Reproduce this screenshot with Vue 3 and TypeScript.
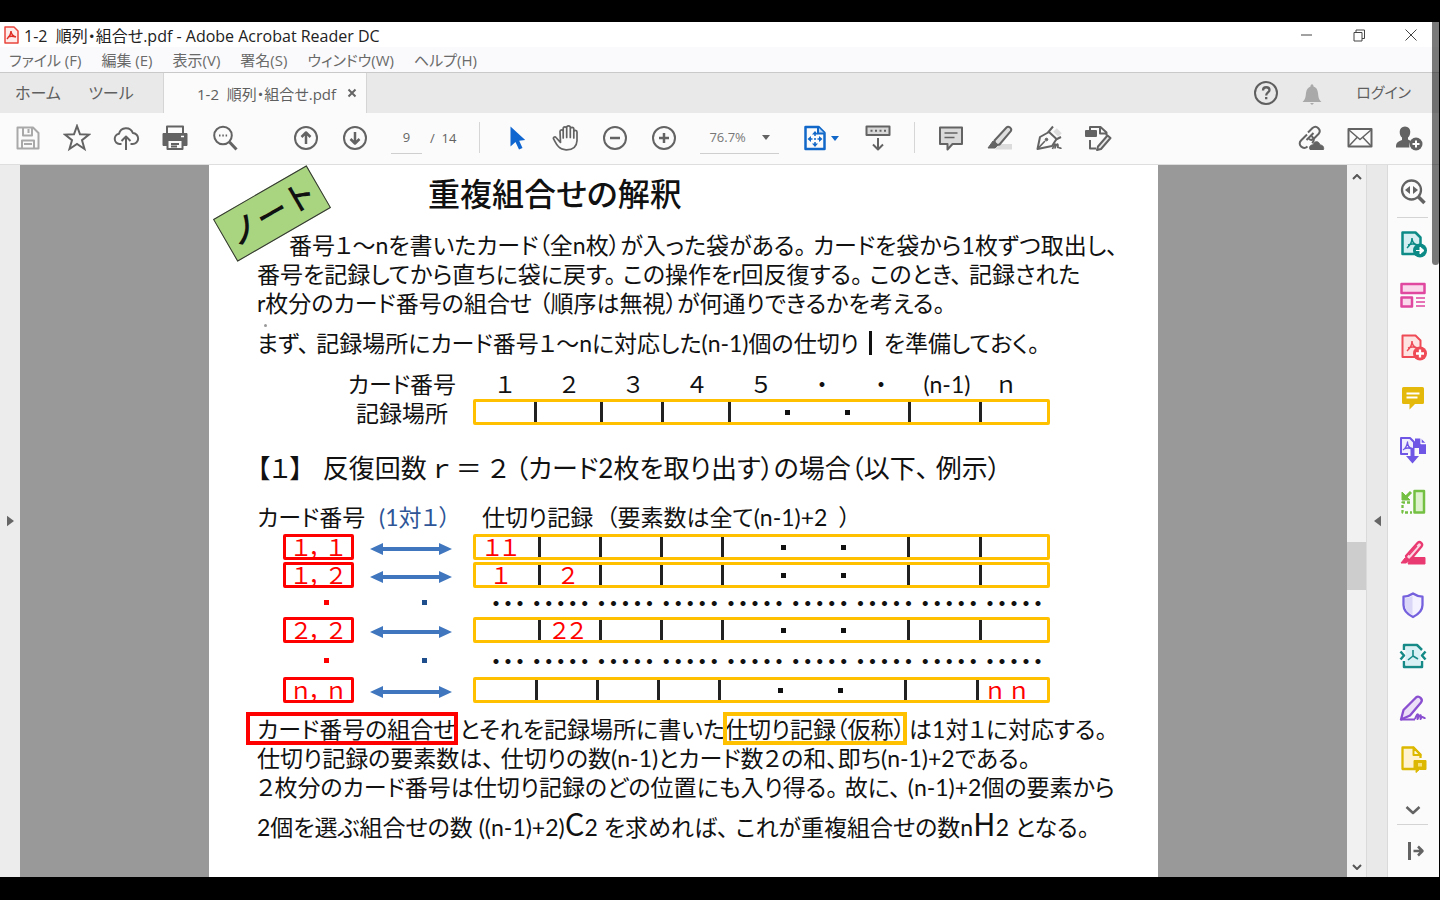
<script setup lang="ts">
import { ref } from 'vue'

interface Tool {
  icon: string
  label: string
  color?: string
}

interface RecordRow {
  pair?: string
  cells?: string[]
  variant?: string
}

const menus: string[] = ['ファイル (F)', '編集 (E)', '表示(V)', '署名(S)', 'ウィンドウ(W)', 'ヘルプ(H)']

const page = ref('9')
const zoom = ref('76.7%')

const fileTools: Tool[] = [
  { icon: 'save', label: '保存', color: '#a9a9a9' },
  { icon: 'star', label: 'スター' },
  { icon: 'cloud', label: 'アップロード' },
  { icon: 'print', label: '印刷' },
  { icon: 'find', label: '検索' },
]
const pageTools: Tool[] = [
  { icon: 'up', label: '前のページ' },
  { icon: 'down', label: '次のページ' },
]
const viewTools: Tool[] = [
  { icon: 'pointer', label: '選択', color: '#0f66d0' },
  { icon: 'hand', label: '手のひら' },
  { icon: 'minus', label: '縮小' },
  { icon: 'plus', label: '拡大' },
]
const noteTools: Tool[] = [
  { icon: 'comment', label: 'コメント' },
  { icon: 'marker', label: 'ハイライト' },
  { icon: 'pen', label: '署名' },
  { icon: 'organize', label: '編集' },
]
const shareTools: Tool[] = [
  { icon: 'link', label: 'リンク' },
  { icon: 'mail', label: 'メール' },
  { icon: 'person', label: '共有' },
]
const sideTools: Tool[] = [
  { icon: 'exportPdf', label: 'PDF を書き出し', color: '#0b8a86' },
  { icon: 'editPdf', label: 'PDF を編集', color: '#e0479e' },
  { icon: 'createPdf', label: 'PDF を作成', color: '#ee4b57' },
  { icon: 'note', label: '注釈', color: '#e5b90b' },
  { icon: 'combine', label: 'ファイルを結合', color: '#6f56e4' },
  { icon: 'pages', label: 'ページを整理', color: '#74c043' },
  { icon: 'redact', label: '墨消し', color: '#ea3a72' },
  { icon: 'shield', label: '保護', color: '#7560dd' },
  { icon: 'compress', label: 'PDF を圧縮', color: '#168a87' },
  { icon: 'sign', label: '入力と署名', color: '#8a4fd0' },
  { icon: 'review', label: 'レビュー', color: '#dcb800' },
]

const columnHeads: string[] = ['１', '２', '３', '４', '５', '・', '・', '(n-1)', 'ｎ']
const emptyCells: string[] = ['', '', '', '', '・・', '', '']

const rows: RecordRow[] = [
  { pair: '１， １', cells: ['１１', '', '', '', '・・', '', ''] },
  { pair: '１， ２', cells: ['１', '２', '', '', '・・', '', ''] },
  {},
  { pair: '２， ２', cells: ['', '２２', '', '', '・・', '', ''] },
  {},
  { pair: 'ｎ， ｎ', cells: ['', '', '', '', '・・', '', 'ｎ ｎ'], variant: 'last' },
]
const dotGroups: string[] = ['･･･', ...Array<string>(8).fill('･････')]

const acro = '<path d="M13 8c0 4-1.500 7-5 10M13 8c0 4 2 6 5 7M9 15c3-1 6-1.500 9 0" stroke-width="1.500"/>'

const icons: Record<string, string> = {
  save: '<path d="M3.500 3.500h15.500l5.500 5.500v15.500h-21z"/><path d="M9 4v7.500h9V4M8 24v-7.500h12V24"/><path d="M14.500 5v4M10 20h8"/>',
  star: '<path d="M14 2l3 8.300 9 .300-7 5.600 2.500 8.800L14 20l-7.500 5L9 16.200 2 10.600l9-.300z" stroke-linejoin="miter"/>',
  cloud: '<path d="M9.500 20H7.500A5.200 5.200 0 0 1 7 9.700 7.200 7.200 0 0 1 20.800 9 5.500 5.500 0 0 1 20.500 20h-2"/><path d="M14 26V13M9.500 17l4.500-4.500 4.500 4.500"/>',
  print: '<path d="M6 10V2.500h16V10"/><path d="M2 9.500h24v12h-4v-5H6v5H2z" fill="currentColor" stroke-width="1"/><path d="M6.500 17v8h15v-8M10 20h8M10 22.500h6" /><path d="M20 12.500h3" stroke="#fff" stroke-width="1.500"/>',
  find: '<circle cx="13" cy="11.500" r="8.800"/><path d="M19.500 18l7 7.500" stroke-width="3"/><path d="M9 11.500h1.500M12.300 11.500h1.500M15.600 11.500h1.500" stroke-width="1.800"/>',
  up: '<circle cx="14" cy="14" r="11"/><path d="M14 20V8.500M9.500 13L14 8.500l4.500 4.500" stroke-width="2.500"/>',
  down: '<circle cx="14" cy="14" r="11"/><path d="M14 8v11.500M9.500 15l4.500 4.500 4.500-4.500" stroke-width="2.500"/>',
  pointer: '<path d="M7.500 2.500v20l5-4.500 3.500 7.500 3.500-1.500-3.300-7.300 6-.700z" fill="currentColor" stroke="none"/>',
  hand: '<path d="M8.500 18.500L4 13.500c-1.200-1.600-3.200 0-2.300 1.600C4 19 6 25.500 14 25.800c7 .200 10.700-3.500 11-9V8c0-2.200-3.200-2.200-3.200 0v6-9c0-2.300-3.500-2.300-3.500 0v8.500V3.500c0-2.300-3.600-2.300-3.600 0v10V4.500c0-2.300-3.500-2.300-3.500 0V14 7.500c0-2.200-3.200-2.200-3.200 0z" stroke-width="1.700"/>',
  minus: '<circle cx="14" cy="14" r="11"/><path d="M9 14h10" stroke-width="2.500"/>',
  plus: '<circle cx="14" cy="14" r="11"/><path d="M9 14h10M14 9v10" stroke-width="2.500"/>',
  fit: '<path d="M4.500 3h13l6 6v16h-19z" stroke-width="2.500"/><path d="M17 3v6.500h6.500" fill="#bcd7f5"/><path d="M14 7l3 3.500h-6zM14 23l3-3.500h-6zM6.500 15l3.500-3v6zM21.500 15L18 12v6z" fill="currentColor" stroke="none"/><path d="M14 10v2M14 18v2M10 15h1.500M16.500 15H18M13 15h2" stroke-width="1.500"/>',
  keyboard: '<path d="M2.500 2.500h23v8.500h-23z" fill="#d8d8d8"/><path d="M6.500 6.800h2M11 6.800h2M15.500 6.800h2M20 6.800h2"/><path d="M14 14v11M9 20.500l5 5 5-5"/>',
  comment: '<path d="M3 3.500h22V20H15.500l-5 5.500V20H3z" fill="#dadada"/><path d="M7.500 9h13M7.500 13.500h10" stroke-width="1.700"/>',
  marker: '<path d="M11 20h15v5.500H9z" fill="#dcdcdc" stroke="none"/><path d="M8.500 16.500L20.500 3.500c2-2 6 1 4.300 3.700L13.500 20.500c-2.500 1-5-1-5-4z" fill="#dedede"/><path d="M7 17l-5 7h7l3-3z" fill="currentColor" stroke-width="1"/>',
  pen: '<path d="M20 6l5 5" stroke="#ddd" stroke-width="5"/><path d="M2.500 25l2.500-12L14 8l7.500 7-4.500 7z"/><path d="M3 24.500l7-7.500" stroke-width="1.600"/><circle cx="11.500" cy="15.500" r="1.300" fill="currentColor" stroke-width="1"/><path d="M13 8.500l5-6M21 15.500l5-2.500"/><path d="M17.500 25c2.500-7 3.500-6 2.500-1 2-5 3.500-5 2.800-.500.700-1 1.500 1.500 3.700.500" stroke-width="1.700"/>',
  organize: '<path d="M6 6V3h10.500l6 5.500v3M16 3.500v6h6M6 16v8.500h6"/><path d="M2 7h10v5H2z" fill="currentColor"/><path d="M14 22.500L23.500 11.500l3 2.500L17 25l-4 1z" fill="#e8e8e8"/>',
  link: '<path d="M9.500 16l7-7M11 8.500L15.500 4c4-3.500 9.500 2 6 6L17 14.500c-1.500 1.500-3.500 1.600-5 .500"/><path d="M14.500 12c3 2.500 3 5 .500 7M10 10.500l-6 6c-4 4 2 10 6.500 6"/><path d="M13 25.500c-1.500-3 1-5 3-4.500 1-4.500 6-4.500 7 0 3.500 0 4 3 3.500 4.500z" fill="currentColor" stroke-width="1"/>',
  mail: '<path d="M2.500 5h23v17.500h-23z"/><path d="M3 6l11 9.500L25 6M3 22l8-8.500M25 22l-8-8.500" stroke-width="1.500"/>',
  person: '<path d="M10 2.500c7 0 6 9 3 11v2l3 1.500c-2 2-2 4-1.500 6.500H1c0-4 .500-5.500 6-7.500v-2.500c-3-2-4-11 3-11z" fill="currentColor" stroke="none"/><circle cx="21" cy="20" r="6.500" fill="currentColor" stroke="none"/><path d="M17.500 20h7M21 16.500v7" stroke="#fff"/>',
  help: '<circle cx="14" cy="14" r="11"/><path d="M11 11.500c0-4.500 6.500-4 6.500-.500 0 2.500-3.300 2.500-3.300 5.500M14.200 18v2.300" stroke-width="2.300"/>',
  bell: '<path d="M4.500 23c3-2.500 3-5 3.500-9 .500-4 2-5.500 4.500-6.500 0-3 3-3 3 0 3 1 4 3 4.500 6.500.500 4 .500 6.500 3.500 9z" fill="currentColor" stroke="none"/><path d="M12 24h4l-2 2z" fill="currentColor" stroke="none"/>',
  searchTools: '<circle cx="12.500" cy="13" r="9.500" stroke-width="2.300"/><path d="M19.500 20l6 6" stroke-width="3.500"/><path d="M11 9v8l-5-4zM14 9v8l5-4z" fill="currentColor" stroke="none"/>',
  exportPdf: `<path d="M3.500 2.500h13l5 5V24h-18z" fill="#d5eef1" stroke-width="2.500"/>${acro}<circle cx="21" cy="20.500" r="7" fill="currentColor" stroke="none"/><path d="M17 20.500h6M21 17l4 3.500-4 3.500z" fill="#fff" stroke="#fff" stroke-width="1"/>`,
  editPdf: '<path d="M2.500 3h23v9h-23z" fill="#fbd9ec" stroke-width="2.500"/><path d="M2.500 16.500h10.500v9H2.500z" fill="#fbd9ec" stroke-width="2.500"/><path d="M17 17h9M17 21h9M17 25h9" stroke-width="1.500"/>',
  createPdf: `<path d="M3.500 2.500h13l5 5V24h-18z" fill="#fde3e1" stroke-width="2"/>${acro}<circle cx="21" cy="20.500" r="7" fill="currentColor" stroke="none"/><path d="M17 20.500h8M21 16.500v8" stroke="#fff" stroke-width="2.300"/>`,
  note: '<path d="M4.500 3h19a1.500 1.500 0 0 1 1.500 1.500v14a1.500 1.500 0 0 1-1.500 1.500H16l-5.500 5.500V20h-6A1.500 1.500 0 0 1 3 18.500v-14A1.500 1.500 0 0 1 4.500 3z" fill="currentColor" stroke="none"/><path d="M7.500 9.500h13M7.500 13.500h11" stroke="#fff"/>',
  combine: '<path d="M9 18H2V2h9l4 4v6" fill="#f0eefd"/><path d="M4 14c3-2 4-4 4.500-8 0 4 2 6 5 6.500M5 13c3-1.500 5-1.500 8 0" stroke-width="1.300"/><path d="M16 2.500h6l5 5V18h-7v-6h-4z" fill="currentColor" stroke="none"/><path d="M22 2v5.500h5.500" stroke="#fff" stroke-width="1.300"/><path d="M13.500 12v9" stroke-width="4"/><path d="M7 20h13l-6.500 7.500z" fill="currentColor" stroke="none"/>',
  pages: '<path d="M15.500 3h9.500v21.500h-9.500z" fill="#dff2ce" stroke-width="2.500"/><path d="M12 4L6 10" stroke-width="3"/><path d="M3 4v8h8z" fill="currentColor" stroke-width="1"/><path d="M11 14.500H3.500v10H13" stroke-dasharray="3 2" stroke-width="2.300"/>',
  redact: '<path d="M7 17L18.500 4c2.500-2.500 6 1 4 3.500L11.500 20.500c-2 1-4.500-1-4.500-3.500z" fill="#fbd8e3" stroke-width="2.300"/><path d="M10 16l8-9" stroke-width="1.300"/><path d="M2 24l4-5 4 3-3 2zM12 18.500h14V25H9z" fill="currentColor" stroke-width="1"/>',
  shield: '<path d="M14 2.500c3 2 6 3 9.500 3.200V14c0 5.500-3.500 9-9.500 12-6-3-9.500-6.500-9.500-12V5.700C8 5.500 11 4.500 14 2.500z" fill="#f3f2fe" stroke-width="2.300"/><path d="M13.500 5v19c-5-3-7.500-6-7.500-10V7.500C9 7 11.500 6 13.500 5z" fill="#d9d6f8" stroke="none"/>',
  compress: '<path d="M5 8V3h13l5 5M5 19v6h18v-6" stroke-width="2.500"/><path d="M6.500 5h11l4 4v14h-15z" fill="#d9f0f5" stroke="none"/><path d="M14 8v6l-5 4M14 14l5 3" stroke-width="1.600"/><path d="M1.500 9.500l3.500 4-3.500 4M26.500 9.500l-3.500 4 3.500 4" stroke-width="2.500"/>',
  sign: '<path d="M2 25.500L4.500 16 17 3.500c3-2.500 7.500 2 5 5L11 21.500z" fill="#eadff6" stroke-width="2.300"/><path d="M2 25.500h14M16 25c3-8 4-4 2.500 0 3-6 4-4 3 0 2-4 3-.500 5-1"/>',
  review: '<path d="M16 24H3.500V2.500h11l7 7V13" fill="#fff3cf" stroke-width="2.300"/><path d="M14.500 2.500v7.500h7z" fill="#fff9dd"/><path d="M15 15.500h12v9h-6.500l-3.500 3v-3h-2z" fill="currentColor" stroke-width="1"/><path d="M19 18h4v3.500h-4z" fill="#f7e27a" stroke="none"/>',
  chevron: '<path d="M7.500 11l6.500 6 6.500-6" stroke-width="2.500"/>',
  expand: '<path d="M10.500 5v18" stroke-width="3"/><path d="M14.500 14h9M19 9.500l4.500 4.500-4.500 4.500" stroke-width="2.500"/>',
}
</script>

<template>
  <div class="screen">
    <div class="window">
      <header class="titlebar">
        <svg class="app-icon" viewBox="0 0 16 18" aria-hidden="true">
          <path d="M2 1h9l4 4v12H2z" fill="#fdecea" stroke="#e8453c" stroke-width="1.500" stroke-linejoin="round" />
          <path d="M8 5c0 3-1 5-4 8M8 5c0 3 2 5 5 6M5 11c2-1 5-1 8 0" fill="none" stroke="#e02f26" stroke-width="1.500" />
        </svg>
        <span class="title">1-2&nbsp; 順列・組合せ.pdf - Adobe Acrobat Reader DC</span>
        <div class="window-buttons">
          <button type="button" aria-label="最小化">
            <svg viewBox="0 0 14 14"><path d="M1 7h11" /></svg>
          </button>
          <button type="button" aria-label="元に戻す">
            <svg viewBox="0 0 14 14"><path d="M2 4.500h8V13H2zM4 4V2h8.500v8.500H10" /></svg>
          </button>
          <button type="button" aria-label="閉じる">
            <svg viewBox="0 0 14 14"><path d="M1.500 1.500l11 11M12.500 1.500l-11 11" /></svg>
          </button>
        </div>
      </header>

      <nav class="menubar">
        <button v-for="m in menus" :key="m" type="button">{{ m }}</button>
      </nav>

      <div class="tabbar">
        <button type="button" class="home">ホーム</button>
        <button type="button" class="tools">ツール</button>
        <div class="tab">
          <span>1-2&nbsp; 順列・組合せ.pdf</span>
          <button type="button" aria-label="タブを閉じる">
            <svg viewBox="0 0 10 10"><path d="M1.500 1.500l7 7M8.500 1.500l-7 7" /></svg>
          </button>
        </div>
        <div class="account">
          <button type="button" class="icon-button" aria-label="ヘルプ"><svg class="icon" viewBox="0 0 28 28" v-html="icons.help" /></button>
          <button type="button" class="icon-button bell" aria-label="通知"><svg class="icon" viewBox="0 0 28 28" v-html="icons.bell" /></button>
          <button type="button" class="login">ログイン</button>
        </div>
      </div>

      <div class="toolbar">
        <div class="group">
          <button v-for="t in fileTools" :key="t.icon" type="button" class="icon-button" :aria-label="t.label" :style="{ color: t.color }">
            <svg class="icon" viewBox="0 0 28 28" v-html="icons[t.icon]" />
          </button>
        </div>
        <div class="group paging">
          <button v-for="t in pageTools" :key="t.icon" type="button" class="icon-button" :aria-label="t.label">
            <svg class="icon" viewBox="0 0 28 28" v-html="icons[t.icon]" />
          </button>
        </div>
        <input v-model="page" class="page-number" type="text" aria-label="ページ番号" />
        <span class="page-total">/&nbsp; 14</span>
        <span class="separator" />
        <div class="group">
          <button v-for="t in viewTools" :key="t.icon" type="button" class="icon-button" :aria-label="t.label" :style="{ color: t.color }">
            <svg class="icon" viewBox="0 0 28 28" v-html="icons[t.icon]" />
          </button>
        </div>
        <div class="zoom">
          <select v-model="zoom" aria-label="表示倍率">
            <option>76.7%</option>
            <option>100%</option>
          </select>
          <svg class="caret" viewBox="0 0 8 6"><path d="M0 1h8L4 6z" /></svg>
        </div>
        <button type="button" class="icon-button fit" aria-label="ページに合わせる">
          <svg class="icon" viewBox="0 0 28 28" v-html="icons.fit" />
          <svg class="caret" viewBox="0 0 8 6"><path d="M0 1h8L4 6z" /></svg>
        </button>
        <button type="button" class="icon-button" aria-label="スクロールモード"><svg class="icon" viewBox="0 0 28 28" v-html="icons.keyboard" /></button>
        <span class="separator second" />
        <div class="group">
          <button v-for="t in noteTools" :key="t.icon" type="button" class="icon-button" :aria-label="t.label">
            <svg class="icon" viewBox="0 0 28 28" v-html="icons[t.icon]" />
          </button>
        </div>
        <div class="group share">
          <button v-for="t in shareTools" :key="t.icon" type="button" class="icon-button" :aria-label="t.label">
            <svg class="icon" viewBox="0 0 28 28" v-html="icons[t.icon]" />
          </button>
        </div>
      </div>

      <div class="workspace">
        <button type="button" class="left-rail" aria-label="ナビゲーションパネルを開く">
          <svg viewBox="0 0 8 12"><path d="M0 0l8 6-8 6z" /></svg>
        </button>

        <main class="canvas">
          <article class="page">
            <div class="sticker">ノート</div>
            <h1>重複組合せの解釈</h1>

            <p class="indent">番号１～nを書いたカード（全n枚）が入った袋がある。<span class="clause">カードを袋から1枚ずつ取出し、</span></p>
            <p>番号を記録してから直ちに袋に戻す。<span class="clause">この操作をr回反復する。</span><span class="clause">このとき、</span><span class="clause">記録された</span></p>
            <p>r枚分のカード番号の組合せ<span class="clause">（順序は無視）</span>が何通りできるかを考える。</p>
            <p class="spaced speck">まず、<span class="clause">記録場所にカード番号１～nに対応した(n-1)個の仕切り</span><b class="bar" /> を準備しておく。</p>

            <div class="scale">
              <span class="scale-label">カード番号</span>
              <div class="heads">
                <span v-for="(c, i) in columnHeads" :key="i">{{ c }}</span>
              </div>
            </div>
            <div class="scale">
              <span class="scale-label">記録場所</span>
              <div class="record first">
                <span v-for="(c, i) in emptyCells" :key="i"><template v-if="c"><i class="dot" /><i class="dot" /></template></span>
              </div>
            </div>

            <h2>【１】&nbsp;&nbsp; 反復回数&nbsp;ｒ&nbsp;＝&nbsp;２<span class="clause">（カード2枚を取り出す）の場合（以下、</span><span class="clause">例示）</span></h2>

            <div class="captions">
              <span>カード番号</span>
              <span class="blue">(1対１）</span>
              <span>仕切り記録 <span class="clause">（要素数は全て(n-1)+2&nbsp; ）</span></span>
            </div>

            <div class="table">
              <div v-for="(r, i) in rows" :key="i" class="match" :class="{ dots: !r.cells }">
                <template v-if="r.cells">
                  <span class="pair">{{ r.pair }}</span>
                  <svg class="arrow" viewBox="0 0 82 14" aria-hidden="true">
                    <path d="M0 7L13 1v4h56V1l13 6-13 6V9H13v4z" />
                  </svg>
                  <div class="record" :class="r.variant">
                    <span v-for="(c, j) in r.cells" :key="j"><template v-if="c === '・・'"><i class="dot" /><i class="dot" /></template><template v-else>{{ c }}</template></span>
                  </div>
                </template>
                <template v-else>
                  <span class="red-dot"><i class="dot" /></span>
                  <span class="blue-dot"><i class="dot" /></span>
                  <div class="dot-groups">
                    <span v-for="(g, j) in dotGroups" :key="j">{{ g }}</span>
                  </div>
                </template>
              </div>
            </div>

            <p class="conclusion"><span class="mark red">カード番号の組合せ</span>とそれを記録場所に書いた<span class="mark gold">仕切り記録（仮称）</span>は1対１に対応する。</p>
            <p>仕切り記録の要素数は、<span class="clause">仕切りの数(n-1)とカード数２の和、</span>即ち(n-1)+2である。</p>
            <p>２枚分のカード番号は仕切り記録のどの位置にも入り得る。<span class="clause">故に、</span><span class="clause">(n-1)+2個の要素から</span></p>
            <p class="spaced">2個を選ぶ組合せの数 ((n-1)+2)<big>C</big>2 を求めれば、<span class="clause">これが重複組合せの数n</span><big>H</big>2 となる。</p>
          </article>
        </main>

        <div class="scrollbar">
          <svg viewBox="0 0 10 6"><path d="M1 5l4-4 4 4" /></svg>
          <span class="thumb" />
          <svg viewBox="0 0 10 6"><path d="M1 1l4 4 4-4" /></svg>
        </div>

        <button type="button" class="right-rail" aria-label="ツールパネルを閉じる">
          <svg viewBox="0 0 8 12"><path d="M8 0L0 6l8 6z" /></svg>
        </button>

        <aside class="side">
          <button type="button" class="side-search" aria-label="ツールを検索"><svg class="icon" viewBox="0 0 28 28" v-html="icons.searchTools" /></button>
          <hr />
          <div class="side-tools">
            <button v-for="t in sideTools" :key="t.icon" type="button" :aria-label="t.label" :style="{ color: t.color }">
              <svg class="icon" viewBox="0 0 28 28" v-html="icons[t.icon]" />
            </button>
          </div>
          <button type="button" class="more" aria-label="さらに表示"><svg class="icon" viewBox="0 0 28 28" v-html="icons.chevron" /></button>
          <hr />
          <button type="button" class="side-search" aria-label="パネルを展開"><svg class="icon" viewBox="0 0 28 28" v-html="icons.expand" /></button>
        </aside>
      </div>
      <span class="edge-scroll" />
    </div>
  </div>
</template>

<style>
body {
  margin: 0;
  background: #000;
}
</style>

<style scoped>
.screen {
  box-sizing: border-box;
  height: 100vh;
  padding: 22px 1px 23px 0;
  background: #000;
  font-family: "Open Sans", "Noto Sans CJK JP", sans-serif;
  font-feature-settings: "palt";
  color: #5f5f5f;
}
button {
  display: flex;
  align-items: center;
  justify-content: center;
  padding: 0;
  border: 0;
  background: none;
  font: inherit;
  font-feature-settings: inherit;
  color: inherit;
  white-space: nowrap;
}
.window {
  position: relative;
  display: flex;
  flex-direction: column;
  height: 100%;
  background: #fbfbfb;
  overflow: hidden;
}
.edge-scroll {
  position: absolute;
  top: 0;
  right: 0;
  width: 7px;
  height: 243px;
  background: rgba(0, 0, 0, 0.52);
  border-radius: 0 0 4px 4px;
}
.icon {
  display: block;
  width: 28px;
  height: 28px;
  fill: none;
  stroke: currentColor;
  stroke-width: 2;
  stroke-linejoin: round;
}

/* title and menus */
.titlebar {
  display: flex;
  align-items: center;
  flex: none;
  height: 25px;
  padding: 0 21px 0 3px;
  background: #fff;
  font-size: 16px;
  color: #222;
}
.app-icon {
  width: 16px;
  height: 18px;
  margin-right: 5px;
}
.window-buttons {
  display: flex;
  gap: 38px;
  margin-left: auto;
}
.window-buttons svg {
  width: 14px;
  height: 14px;
  fill: none;
  stroke: #444;
}
.menubar {
  display: flex;
  align-items: center;
  flex: none;
  gap: 20px;
  height: 25px;
  padding-left: 9px;
  background: #fafafc;
  font-size: 15px;
  color: #6a6a6a;
}

/* tabs */
.tabbar {
  box-sizing: border-box;
  display: flex;
  flex: none;
  height: 41px;
  padding-left: 15px;
  border-top: 1px solid #c9c9c9;
  background: #e9e9e9;
  font-size: 16px;
}
.home,
.tools,
.login {
  padding-bottom: 3px;
}
.home {
  width: 46px;
}
.tools {
  width: 44px;
  margin: 0 30px 0 28px;
}
.tab {
  display: flex;
  align-items: center;
  gap: 11px;
  padding: 0 9px 0 33px;
  border: solid #d5d5d5;
  border-width: 0 1px;
  background: #fbfbfb;
  font-size: 15px;
}
.tab svg {
  width: 10px;
  height: 10px;
  fill: none;
  stroke: #666;
  stroke-width: 2;
}
.account {
  display: flex;
  align-items: center;
  gap: 18px;
  margin-left: auto;
  padding-right: 28px;
}
.bell {
  color: #a9a9a9;
}
.login {
  margin-left: 12px;
  font-size: 15px;
}

/* toolbar */
.toolbar {
  box-sizing: border-box;
  display: flex;
  align-items: center;
  flex: none;
  height: 52px;
  padding: 0 16px 2px 14px;
  border-bottom: 1px solid #dedede;
  color: #636363;
}
.group {
  display: flex;
  gap: 21px;
}
.paging {
  margin-left: 54px;
}
.page-number {
  box-sizing: border-box;
  width: 31px;
  height: 32px;
  margin-left: 22px;
  padding: 0 0 1px;
  border: 0;
  border-bottom: 1px solid #cfcfcf;
  background: none;
  font: 13px "Open Sans", sans-serif;
  color: #666;
  text-align: center;
}
.page-total {
  margin-left: 8px;
  font-size: 13px;
}
.separator {
  width: 1px;
  height: 31px;
  margin: 0 23px;
  background: #d6d6d6;
}
.zoom {
  display: flex;
  align-items: center;
  width: 79px;
  height: 32px;
  margin-left: 22px;
  border-bottom: 1px solid #cfcfcf;
}
.zoom select {
  appearance: none;
  width: 62px;
  padding: 0 0 0 9px;
  border: 0;
  background: none;
  font: 13px "Open Sans", sans-serif;
  color: #777;
}
.caret {
  width: 8px;
  height: 6px;
  fill: currentColor;
}
.fit {
  gap: 2px;
  margin: 0 25px 0 22px;
  color: #1268c8;
}
.second {
  margin: 0 22px;
}
.share {
  margin-left: auto;
}

/* workspace */
.workspace {
  display: flex;
  flex: 1;
  min-height: 0;
}
.left-rail {
  width: 20px;
  background: #ececec;
}
.left-rail svg,
.right-rail svg {
  width: 7px;
  height: 12px;
  fill: #666;
}
.right-rail {
  width: 22px;
  border-right: 1px solid #dadada;
  border-left: 1px solid #dadada;
  background: #e9e9e9;
  box-sizing: border-box;
}
.canvas {
  flex: 1;
  min-width: 0;
  padding: 0 189px;
  background: #999;
  overflow: hidden;
}
.scrollbar {
  display: flex;
  flex-direction: column;
  align-items: center;
  width: 19px;
  padding: 9px 0 7px;
  background: #f1f1f1;
}
.scrollbar svg {
  width: 10px;
  height: 6px;
  fill: none;
  stroke: #555;
  stroke-width: 2;
}
.thumb {
  width: 19px;
  height: 48px;
  margin: auto 0 274px;
  background: #cdcdcd;
}
.side {
  display: flex;
  flex-direction: column;
  align-items: center;
  box-sizing: border-box;
  width: 51px;
  padding-right: 2px;
  color: #636363;
}
.side hr {
  width: 31px;
  height: 1px;
  margin: 0;
  border: 0;
  background: #d4d4d4;
}
.side-search {
  height: 52px;
}
.side-tools {
  display: flex;
  flex: 1;
  flex-direction: column;
  padding-bottom: 11px;
}
.side-tools button {
  flex: 1;
}

/* document */
.page {
  position: relative;
  box-sizing: border-box;
  height: 100%;
  padding: 9px 0 0 48px;
  background: #fff;
  font-family: Lato, "Noto Sans CJK JP", sans-serif;
  font-size: 23px;
  line-height: 29px;
  color: #111;
  white-space: nowrap;
  overflow: hidden;
}
.sticker {
  position: absolute;
  top: 24px;
  left: 9px;
  box-sizing: border-box;
  width: 108px;
  height: 49px;
  border: 1px solid #333;
  background: #a9d581;
  font-size: 32px;
  font-weight: 500;
  font-feature-settings: normal;
  line-height: 46px;
  text-align: center;
  transform: rotate(-30deg);
}
h1 {
  margin: 0 0 17px 171px;
  font-size: 32px;
  font-weight: 500;
  line-height: 40px;
}
p {
  margin: 0;
}
.clause {
  margin-left: 7px;
}
.indent {
  padding-left: 32px;
}
.spaced {
  margin-top: 11px;
}
.speck {
  position: relative;
}
.speck::before {
  content: "";
  position: absolute;
  top: -5px;
  left: 7px;
  width: 3px;
  height: 3px;
  border-radius: 50%;
  background: #999;
}
.bar {
  display: inline-block;
  width: 3px;
  height: 24px;
  margin: 0 6px 0 10px;
  background: #111;
  vertical-align: -3px;
}
.scale {
  display: flex;
  margin: 0 108px 0 -48px;
}
.speck + .scale {
  margin-top: 12px;
}
.scale-label {
  box-sizing: border-box;
  flex: none;
  width: 264px;
  padding-left: 122px;
  text-align: center;
}
.heads {
  display: grid;
  flex: 1;
  grid-template-columns: repeat(5, 64px) 58px 60px 72px 46px;
  text-align: center;
}
.record {
  box-sizing: border-box;
  display: grid;
  flex: 1;
  grid-template-columns: 62px 61px 61px 61px 186px 72px 1fr;
  height: 26px;
  border: 3px solid #ffc000;
  border-radius: 2px;
  line-height: 20px;
  color: #f00;
}
.record.first {
  grid-template-columns: 58px 66px 61px 67px 180px 71px 1fr;
}
.record.last {
  grid-template-columns: 59px 61px 61px 61px 186px 72px 1fr;
}
.record span {
  display: flex;
  align-items: center;
  justify-content: center;
  padding-right: 4px;
  white-space: pre;
}
.record span:first-child {
  padding-right: 12px;
}
.record span:last-child {
  padding-right: 12px;
}
.record span + span {
  border-left: 3px solid #222;
}
.record span:nth-child(5) {
  gap: 55px;
}
.dot {
  display: block;
  width: 5px;
  height: 5px;
  background: currentColor;
}
.record .dot {
  background: #111;
}
h2 {
  margin: 23px 0 18px;
  font-size: 26px;
  font-weight: 400;
  line-height: 34px;
}
.captions {
  display: grid;
  grid-template-columns: 122px 103px 1fr;
}
.blue {
  color: #2f5597;
}
.table {
  display: flex;
  flex-direction: column;
  gap: 2px;
  margin: 2px 108px 0 26px;
}
.match {
  display: flex;
  align-items: center;
}
.pair {
  box-sizing: border-box;
  flex: none;
  width: 71px;
  height: 26px;
  border: 3px solid #f00;
  border-radius: 2px;
  line-height: 20px;
  text-align: center;
  color: #f00;
}
.arrow {
  flex: none;
  width: 82px;
  height: 14px;
  margin: 4px 21px 0 16px;
  fill: #3f76bd;
}
.dots {
  height: 25px;
}
.dots:nth-child(5) {
  height: 30px;
}
.red-dot {
  width: 98px;
  padding-left: 41px;
  box-sizing: border-box;
  color: #f00;
}
.blue-dot {
  width: 109px;
  padding-left: 41px;
  box-sizing: border-box;
  color: #1f4e8c;
}
.dot-groups {
  display: flex;
  flex: 1;
  justify-content: space-between;
  padding-right: 6px;
  font-size: 24px;
  font-weight: 900;
  font-feature-settings: normal;
}
.conclusion {
  margin-top: 12px;
}
.mark {
  position: relative;
  margin-right: 4px;
}
.mark::before {
  content: "";
  position: absolute;
  inset: -3px -2px -2px -2px;
  border: 4px solid #ffc000;
}
.mark.red::before {
  left: -11px;
  border-color: #f00;
}
big {
  font-family: "Noto Sans CJK JP", sans-serif;
  font-size: 31px;
  line-height: 20px;
}
</style>
